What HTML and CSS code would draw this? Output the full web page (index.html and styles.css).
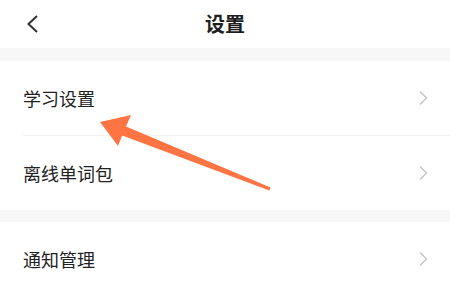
FILE: index.html
```html
<!DOCTYPE html>
<html lang="zh">
<head>
<meta charset="utf-8">
<link rel="stylesheet" href="styles.css">
</head>
<body>
<div class="page">
  <header class="topbar">
    <svg class="back" width="12" height="20" viewBox="0 0 12 20"><polyline points="10,2 1.5,10 10,18" fill="none" stroke="#333" stroke-width="2"/></svg>
    <h1 class="title">设置</h1>
  </header>
  <div class="band band-top"></div>
  <section class="group">
    <div class="row row-sep">
      <span class="label">学习设置</span>
      <svg class="chev" width="10" height="16" viewBox="0 0 10 16"><polyline points="2,1.5 8.5,8 2,14.5" fill="none" stroke="#c6c6c6" stroke-width="1.5"/></svg>
    </div>
    <div class="row">
      <span class="label">离线单词包</span>
      <svg class="chev" width="10" height="16" viewBox="0 0 10 16"><polyline points="2,1.5 8.5,8 2,14.5" fill="none" stroke="#c6c6c6" stroke-width="1.5"/></svg>
    </div>
  </section>
  <div class="band band-mid"></div>
  <section class="group">
    <div class="row">
      <span class="label">通知管理</span>
      <svg class="chev" width="10" height="16" viewBox="0 0 10 16"><polyline points="2,1.5 8.5,8 2,14.5" fill="none" stroke="#c6c6c6" stroke-width="1.5"/></svg>
    </div>
  </section>
  <svg class="arrow" width="450" height="285" viewBox="0 0 450 285">
    <polygon points="100,122 131,115 126,126.4 270.5,187.4 269.4,190.6 122.2,135.6 118,146" fill="#ff7443"/>
  </svg>
</div>
</body>
</html>
```

FILE: styles.css
```css
* { box-sizing: border-box; }
html, body {
  margin: 0;
  padding: 0;
  background: #ffffff;
}
body {
  font-family: "Noto Sans CJK SC", "Noto Sans", sans-serif;
  color: #222;
}
.page {
  position: relative;
  width: 450px;
  height: 285px;
  overflow: hidden;
  background: #fff;
}
.topbar {
  height: 48px;
  display: flex;
  align-items: center;
  justify-content: center;
  position: relative;
}
.back {
  position: absolute;
  left: 27px;
  top: 14px;
}
.title {
  margin: 0;
  font-size: 20px;
  font-weight: 700;
  line-height: 1;
  color: #1e1e1e;
  letter-spacing: 0;
}
.band {
  background: #f7f7f7;
}
.band-top { height: 13px; }
.band-mid { height: 12px; }
.row {
  height: 74px;
  display: flex;
  align-items: center;
  justify-content: space-between;
  padding: 0 22px 0 23px;
}
.row-sep {
  height: 75px;
  border-bottom: 1px solid #f1f1f1;
  margin-left: 23px;
  padding-left: 0;
}
.label {
  font-size: 18px;
  line-height: 1;
  color: #222;
}
.chev {
  display: block;
}
.arrow {
  position: absolute;
  left: 0;
  top: 0;
  pointer-events: none;
}
```
